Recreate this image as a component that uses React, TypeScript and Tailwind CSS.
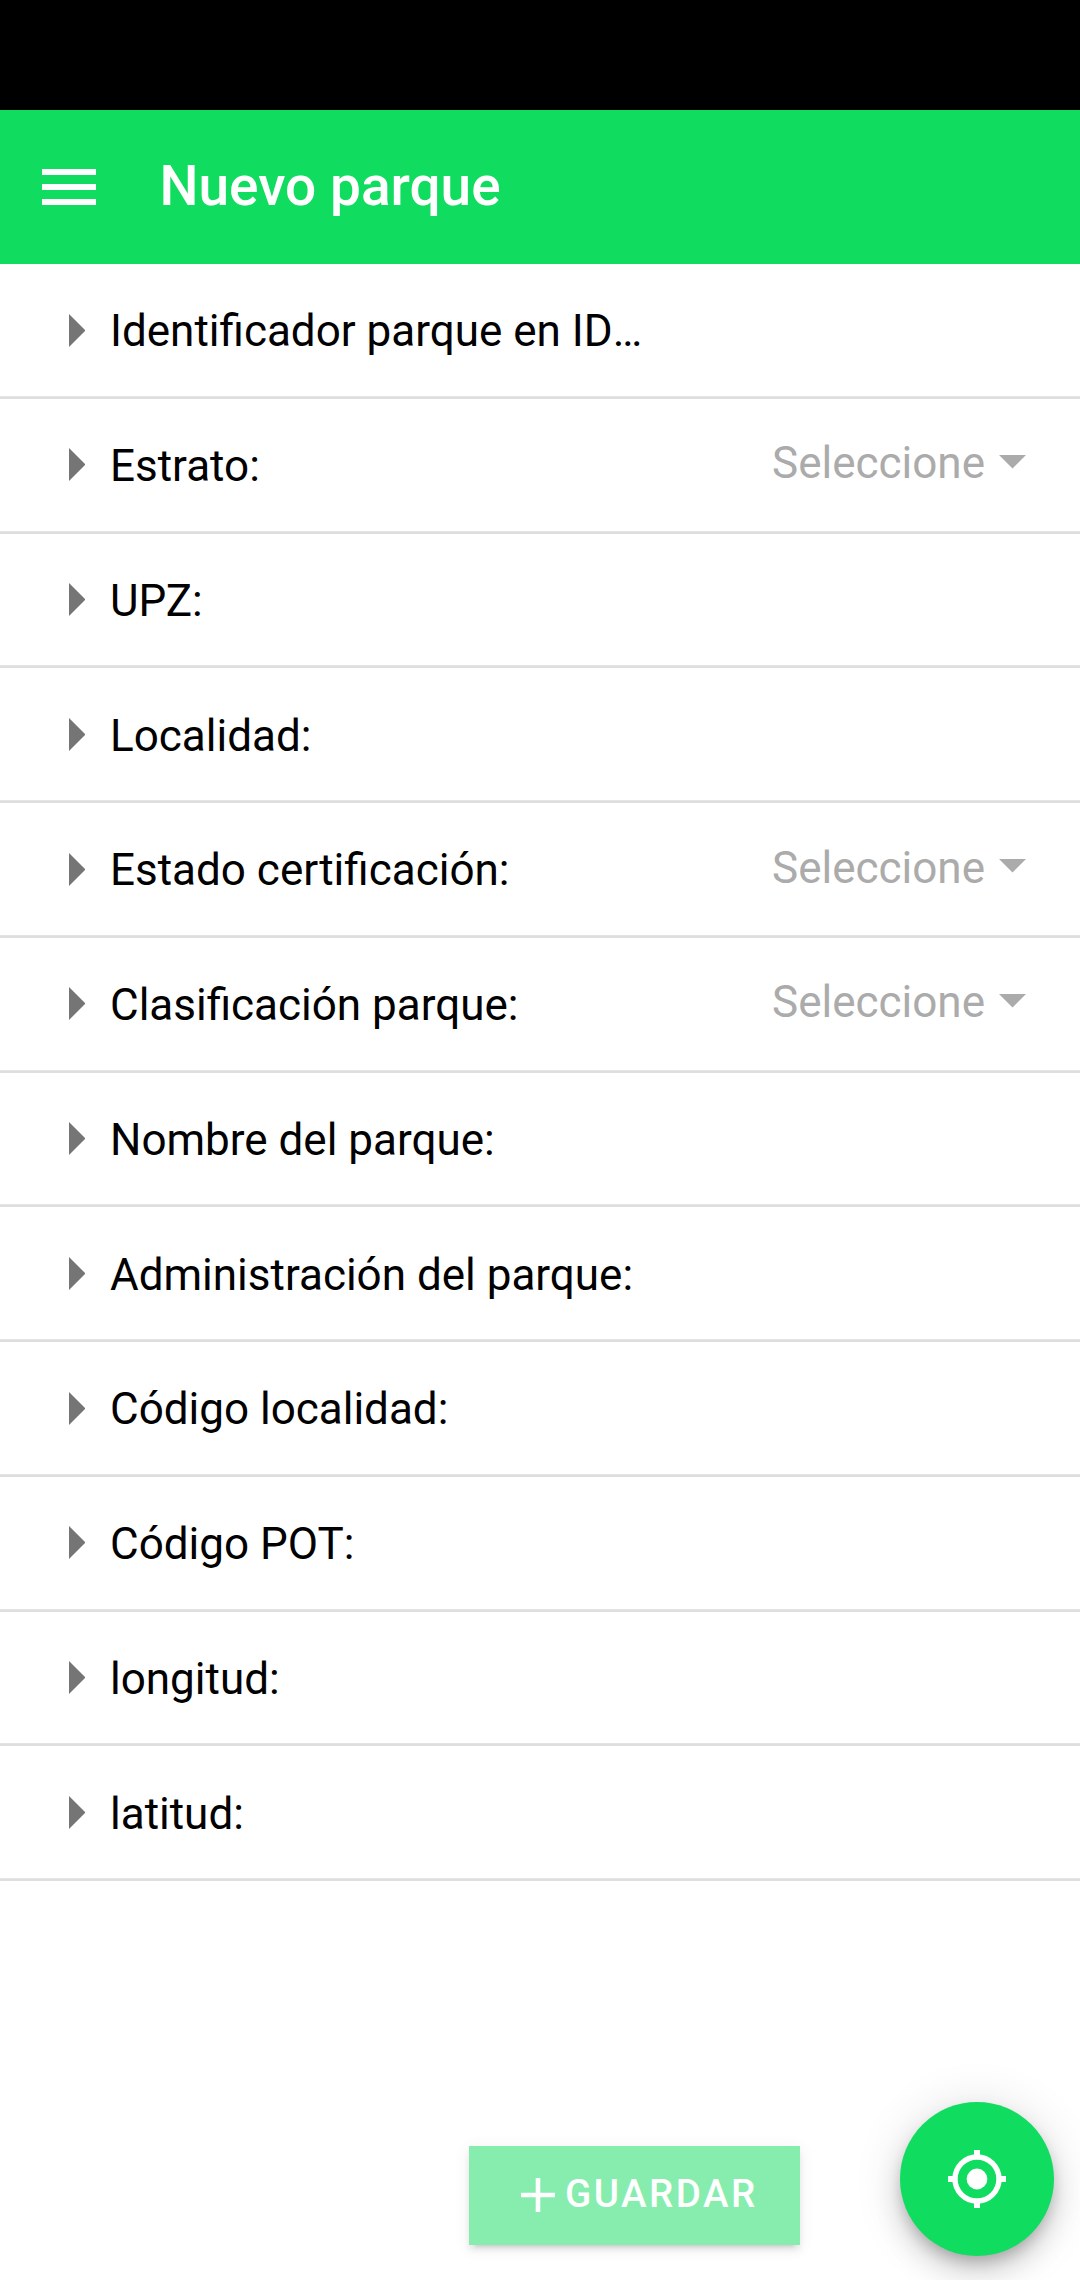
const fields: { label: string; cut?: boolean; select?: boolean }[] = [
  { label: 'Identificador parque en ID', cut: true },
  { label: 'Estrato:', select: true },
  { label: 'UPZ:' },
  { label: 'Localidad:' },
  { label: 'Estado certificación:', select: true },
  { label: 'Clasificación parque:', select: true },
  { label: 'Nombre del parque:' },
  { label: 'Administración del parque:' },
  { label: 'Código localidad:' },
  { label: 'Código POT:' },
  { label: 'longitud:' },
  { label: 'latitud:' },
];

function Field({ label, cut, select }: { label: string; cut?: boolean; select?: boolean }) {
  return (
    <li className="flex h-[134.75px] flex-col">
      <div className="flex flex-1 items-center pl-[68.5px] pr-[54px]">
        <svg className="mt-[0.4px] h-[33px] w-[16.5px] shrink-0 text-[#757575]" viewBox="0 0 5 10" fill="currentColor">
          <path d="M0 0l5 5-5 5z" />
        </svg>
        <span className="ml-[25px] mt-[3px] flex-1 whitespace-nowrap text-[44px] leading-[52px] text-black">
          {label}
          {cut && <span className="inline-block">…</span>}
        </span>
        {select && (
          <button className="-mt-[2.4px] flex items-center text-[44px] leading-[52px] text-[#ababab]">
            <span>Seleccione</span>
            <svg className="-mt-[3px] ml-[14px] h-[13.5px] w-[27px]" viewBox="0 0 10 5" fill="currentColor">
              <path d="M0 0h10L5 5z" />
            </svg>
          </button>
        )}
      </div>
      <div className="h-[3px] shrink-0 border-t border-[#e4e4e4] bg-[#dedede]" />
    </li>
  );
}

export default function App() {
  return (
    <div className="relative flex h-[2280px] w-[1080px] flex-col overflow-hidden bg-white font-[Roboto,sans-serif]">
      <div className="h-[110px] shrink-0 bg-black" />
      <header className="flex h-[154px] shrink-0 items-center bg-[#10dc60] pl-[42px] text-white">
        <button className="flex w-[54px] flex-col gap-[9px]" aria-label="Menú">
          <span className="h-[6px] bg-white" />
          <span className="h-[6px] bg-white" />
          <span className="h-[6px] bg-white" />
        </button>
        <h1 className="-mt-[2px] ml-[63.5px] text-[55px] font-medium leading-[66px]">Nuevo parque</h1>
      </header>
      <ul className="shrink-0">
        {fields.map((f) => (
          <Field key={f.label} label={f.label} cut={f.cut} select={f.select} />
        ))}
      </ul>
      <footer className="flex flex-1 items-end pb-[35px] pl-[469px]">
        <button className="flex h-[99px] w-[331px] items-center bg-[#10dc60] pb-[1px] pl-[52px] text-[38.5px] font-medium tracking-[2.5px] text-white opacity-50 shadow-[0_8.25px_2.75px_-5.5px_rgba(0,0,0,0.2),0_5.5px_5.5px_0_rgba(0,0,0,0.14),0_2.75px_13.75px_0_rgba(0,0,0,0.12)]">
          <svg className="h-[34px] w-[34px]" viewBox="0 0 34 34" stroke="currentColor" strokeWidth="4.6">
            <path d="M17 0v34M0 17h34" />
          </svg>
          <span className="-mt-[2px] ml-[10px] leading-[46px]">GUARDAR</span>
        </button>
      </footer>
      <button
        aria-label="Ubicación"
        className="absolute bottom-[24px] right-[26px] flex size-[154px] items-center justify-center rounded-full bg-[#10dc60] text-white shadow-[0_8.25px_13.75px_-2.75px_rgba(0,0,0,0.2),0_16.5px_27.5px_0_rgba(0,0,0,0.14),0_2.75px_49.5px_0_rgba(0,0,0,0.12)]"
      >
        <svg className="size-[58px]" viewBox="0 0 58 58" fill="none" stroke="currentColor">
          <circle cx="29" cy="29" r="22" strokeWidth="5.4" />
          <circle cx="29" cy="29" r="10.4" fill="currentColor" stroke="none" />
          <path d="M29 0v6M29 52v6M0 29h6M52 29h6" strokeWidth="6" />
        </svg>
      </button>
    </div>
  );
}
